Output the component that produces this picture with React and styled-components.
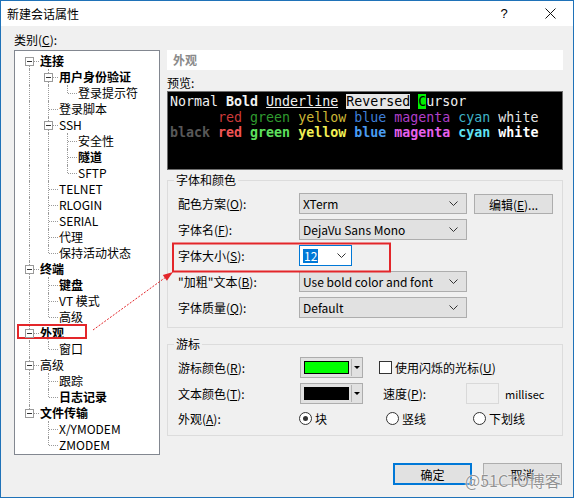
import React from 'react';
import styled, { createGlobalStyle } from 'styled-components';

const Global = createGlobalStyle`
  html, body { margin: 0; padding: 0; background: #ffffff; }
  body { font-family: "Noto Sans CJK SC", sans-serif; font-size: 12px; color: #000; }
  * { box-sizing: border-box; }
`;

const Window = styled.div`
  position: relative;
  width: 574px;
  height: 498px;
  border: 1px solid #1f72b8;
  display: flex;
  flex-direction: column;
  background: #f0f0f0;
`;

const TitleBar = styled.div`
  height: 25px;
  background: #ffffff;
  display: flex;
  align-items: center;
  flex: none;
`;

const TitleText = styled.div`
  padding-left: 6px;
  line-height: 25px;
  flex: 1;
`;

const TitleButton = styled.div`
  width: 46px;
  height: 25px;
  display: flex;
  align-items: center;
  justify-content: center;
  font-family: "Liberation Sans", sans-serif;
  font-size: 13px;
`;

const Body = styled.div`
  flex: 1;
  display: flex;
  flex-direction: column;
  padding: 6px 10px 0 13px;
`;

const Main = styled.div`
  display: flex;
  gap: 7px;
  align-items: flex-start;
`;

const LeftCol = styled.div`
  width: 146px;
  display: flex;
  flex-direction: column;
  gap: 2px;
`;

const Label = styled.div`
  line-height: 16px;
  white-space: nowrap;
`;

const Mn = styled.span`
  text-decoration: underline;
`;

const TreeBox = styled.div`
  height: 405px;
  background: #ffffff;
  border: 1px solid #828790;
  padding: 2px 0 0 5px;
  overflow: hidden;
`;

const TreeRow = styled.div`
  display: flex;
  align-items: center;
  height: 16px;
`;

const Cell = styled.div`
  position: relative;
  flex: none;
  width: 19px;
  height: 16px;
  &::before {
    content: '';
    display: ${p => (p.$v ? 'block' : 'none')};
    position: absolute;
    left: 9px;
    top: ${p => (p.$top ? '0' : '8px')};
    bottom: ${p => (p.$bottom ? '0' : '8px')};
    border-left: 1px dotted #9a9a9a;
  }
  &::after {
    content: '';
    display: ${p => (p.$h ? 'block' : 'none')};
    position: absolute;
    left: 10px;
    right: 0;
    top: 8px;
    border-top: 1px dotted #9a9a9a;
  }
`;

const ExpandBox = styled.span`
  position: absolute;
  z-index: 1;
  left: 5px;
  top: 4px;
  width: 9px;
  height: 9px;
  border: 1px solid #9a9a9a;
  background: #ffffff;
  &::after {
    content: '';
    position: absolute;
    left: 1px;
    top: 3px;
    width: 5px;
    height: 1px;
    background: #333;
  }
`;

const TreeText = styled.span`
  margin-left: 1px;
  line-height: 16px;
  white-space: nowrap;
  font-weight: ${p => (p.$bold ? 700 : 400)};
`;

const RightCol = styled.div`
  width: 396px;
  padding-top: 18px;
  display: flex;
  flex-direction: column;
`;

const Heading = styled.div`
  height: 20px;
  line-height: 20px;
  background: #ffffff;
  padding-left: 6px;
  color: #8a8a8a;
  font-weight: 700;
`;

const PreviewLabel = styled(Label)`
  margin-top: 5px;
`;

const Preview = styled.div`
  height: 79px;
  background: #000000;
  border: 1px solid #6d6d6d;
  padding: 2px 2px;
  font-family: "DejaVu Sans Mono", monospace;
  font-size: 13.3px;
  line-height: 15.5px;
  color: #f2f2f2;
  white-space: pre;
`;

const PLine = styled.div``;

const T = styled.span`
  color: ${p => p.$c || 'inherit'};
  font-weight: ${p => (p.$b ? 700 : 400)};
  text-decoration: ${p => (p.$u ? 'underline' : 'none')};
  background: ${p => p.$bg || 'transparent'};
`;

const Group = styled.fieldset`
  margin: ${p => p.$mt}px 0 0 0;
  border: 1px solid #dcdcdc;
  padding: 5px 9px ${p => p.$pb}px 10px;
  min-width: 0;
`;

const Legend = styled.legend`
  padding: 0 2px;
  margin-left: -4px;
  line-height: 16px;
`;

const FontGrid = styled.div`
  display: grid;
  grid-template-columns: 114px 168px 79px;
  column-gap: 7px;
  row-gap: 5px;
  align-items: center;
`;

const FieldLabel = styled.div`
  line-height: 21px;
  white-space: nowrap;
`;

const Combo = styled.div`
  height: 21px;
  width: ${p => (p.$w ? `${p.$w}px` : 'auto')};
  border: 1px solid ${p => (p.$focus ? '#0078d7' : '#adadad')};
  background: ${p => (p.$focus ? '#ffffff' : '#e1e1e1')};
  display: flex;
  align-items: center;
  justify-content: space-between;
  padding: 0 ${p => (p.$focus ? 5 : 8)}px 0 3px;
  white-space: nowrap;
`;

const Selected = styled.span`
  background: #0078d7;
  color: #ffffff;
  line-height: 14px;
  padding: 0 1px;
`;

const Button = styled.div`
  height: ${p => p.$h || 21}px;
  width: 79px;
  display: flex;
  align-items: center;
  justify-content: center;
  background: #e1e1e1;
  border: 1px solid ${p => (p.$default ? '#0078d7' : '#adadad')};
  box-shadow: ${p => (p.$default ? 'inset 0 0 0 1px #0078d7' : 'none')};
  white-space: nowrap;
`;

const EditButton = styled(Button)`
  align-self: end;
  height: 20px;
`;

const CursorRow = styled.div`
  display: flex;
  align-items: center;
  height: ${p => p.$h || 21}px;
  margin-top: ${p => p.$mt || 0}px;
`;

const RowLabel = styled.div`
  width: ${p => p.$w}px;
  flex: none;
  white-space: nowrap;
`;

const ColorBtn = styled.div`
  width: 63px;
  height: 21px;
  flex: none;
  background: #e1e1e1;
  border: 1px solid #adadad;
  display: flex;
  align-items: center;
  padding-left: 3px;
`;

const Swatch = styled.span`
  width: 45px;
  height: 13px;
  border: 1px solid #000;
  background: ${p => p.$c};
`;

const Divider = styled.span`
  width: 1px;
  height: 17px;
  margin-left: 2px;
  background: #b5b5b5;
`;

const DropTri = styled.span`
  margin-left: 2px;
  width: 0;
  height: 0;
  border-left: 3px solid transparent;
  border-right: 3px solid transparent;
  border-top: 3px solid #000;
`;

const Check = styled.span`
  width: 13px;
  height: 13px;
  flex: none;
  border: 1px solid #333;
  background: #ffffff;
  margin-left: ${p => p.$ml}px;
  margin-right: 3px;
`;

const SpeedLabel = styled.div`
  margin-left: 20px;
  width: 83px;
  flex: none;
`;

const SpeedInput = styled.div`
  width: 33px;
  height: 21px;
  border: 1px solid #d9d9d9;
  background: #f0f0f0;
`;

const Small = styled.span`
  margin-left: 6px;
  font-size: 11px;
`;

const RadioOpt = styled.div`
  width: 87px;
  flex: none;
  display: flex;
  align-items: center;
  gap: 3px;
`;

const Radio = styled.span`
  width: 13px;
  height: 13px;
  border-radius: 50%;
  border: 1px solid #333;
  background: #ffffff;
  display: flex;
  align-items: center;
  justify-content: center;
  &::after {
    content: '';
    display: ${p => (p.$on ? 'block' : 'none')};
    width: 5px;
    height: 5px;
    border-radius: 50%;
    background: #333;
  }
`;

const Footer = styled.div`
  display: flex;
  justify-content: flex-end;
  gap: 11px;
  margin-top: 8px;
  padding-right: 1px;
`;

const Overlay = styled.svg`
  position: absolute;
  left: -1px;
  top: -1px;
  pointer-events: none;
`;

const Watermark = styled.span`
  position: absolute;
  left: 464px;
  top: 469px;
  font-size: 16px;
  line-height: 20px;
  color: rgba(110, 110, 110, 0.75);
  text-shadow: 0 0 2px #fff, 0 0 1px #fff;
  white-space: nowrap;
`;

const Chevron = ({ w = 9 }) => (
  <svg width={w} height="5" viewBox="0 0 9 5">
    <polyline points="0.5,0.5 4.5,4.5 8.5,0.5" fill="none" stroke="#333" strokeWidth="1" />
  </svg>
);

const treeItems = [
  { label: '连接', depth: 0, bold: true, box: true },
  { label: '用户身份验证', depth: 1, bold: true, box: true },
  { label: '登录提示符', depth: 2 },
  { label: '登录脚本', depth: 1 },
  { label: 'SSH', depth: 1, box: true },
  { label: '安全性', depth: 2 },
  { label: '隧道', depth: 2, bold: true },
  { label: 'SFTP', depth: 2 },
  { label: 'TELNET', depth: 1 },
  { label: 'RLOGIN', depth: 1 },
  { label: 'SERIAL', depth: 1 },
  { label: '代理', depth: 1 },
  { label: '保持活动状态', depth: 1 },
  { label: '终端', depth: 0, bold: true, box: true },
  { label: '键盘', depth: 1, bold: true },
  { label: 'VT 模式', depth: 1 },
  { label: '高级', depth: 1 },
  { label: '外观', depth: 0, bold: true, box: true },
  { label: '窗口', depth: 1 },
  { label: '高级', depth: 0, box: true },
  { label: '跟踪', depth: 1 },
  { label: '日志记录', depth: 1, bold: true },
  { label: '文件传输', depth: 0, bold: true, box: true },
  { label: 'X/YMODEM', depth: 1 },
  { label: 'ZMODEM', depth: 1 },
];

function hasNext(i, depth) {
  for (let j = i + 1; j < treeItems.length; j++) {
    if (treeItems[j].depth < depth) return false;
    if (treeItems[j].depth === depth) return true;
  }
  return false;
}

function Tree() {
  return (
    <TreeBox>
      {treeItems.map((it, i) => {
        const guides = [];
        for (let k = 0; k < it.depth; k++) {
          const on = hasNext(i, k);
          guides.push(<Cell key={k} $v={on} $top $bottom />);
        }
        const next = hasNext(i, it.depth);
        return (
          <TreeRow key={i}>
            {guides}
            <Cell $v $top={i !== 0} $bottom={next} $h>
              {it.box && <ExpandBox />}
            </Cell>
            <TreeText $bold={it.bold}>{it.label}</TreeText>
          </TreeRow>
        );
      })}
    </TreeBox>
  );
}

export default function App() {
  const tip = [173, 272];
  return (
    <>
      <Global />
      <Window>
        <TitleBar>
          <TitleText>新建会话属性</TitleText>
          <TitleButton>?</TitleButton>
          <TitleButton>
            <svg width="11" height="11" viewBox="0 0 11 11">
              <path d="M0.5 0.5 L10.5 10.5 M10.5 0.5 L0.5 10.5" stroke="#111" strokeWidth="1" />
            </svg>
          </TitleButton>
        </TitleBar>
        <Body>
          <Main>
            <LeftCol>
              <Label>类别(<Mn>C</Mn>):</Label>
              <Tree />
            </LeftCol>
            <RightCol>
              <Heading>外观</Heading>
              <PreviewLabel>预览:</PreviewLabel>
              <Preview>
                <PLine>
                  <T>Normal </T><T $b>Bold</T> <T $u>Underline</T> <T $bg="#e6e6e6" $c="#000">Reversed</T>{' '}
                  <T $bg="#00f000" $c="#000">C</T>ursor
                </PLine>
                <PLine>
                  <T $c="#000">black</T> <T $c="#cd3a3a">red</T> <T $c="#2f9a2f">green</T>{' '}
                  <T $c="#cdb836">yellow</T> <T $c="#3f7fd8">blue</T> <T $c="#b03fc8">magenta</T>{' '}
                  <T $c="#3fb4c8">cyan</T> <T $c="#e5e5e5">white</T>
                </PLine>
                <PLine>
                  <T $b $c="#585858">black</T> <T $b $c="#f05555">red</T> <T $b $c="#5ee05e">green</T>{' '}
                  <T $b $c="#f2f055">yellow</T> <T $b $c="#4a9cf2">blue</T> <T $b $c="#e660ec">magenta</T>{' '}
                  <T $b $c="#5fe2f2">cyan</T> <T $b $c="#ffffff">white</T>
                </PLine>
              </Preview>

              <Group $mt={2} $pb={9}>
                <Legend>字体和颜色</Legend>
                <FontGrid>
                  <FieldLabel>配色方案(<Mn>O</Mn>):</FieldLabel>
                  <Combo>XTerm<Chevron /></Combo>
                  <EditButton>编辑(<Mn>E</Mn>)...</EditButton>

                  <FieldLabel>字体名(<Mn>F</Mn>):</FieldLabel>
                  <Combo>DejaVu Sans Mono<Chevron /></Combo>
                  <span />

                  <FieldLabel>字体大小(<Mn>S</Mn>):</FieldLabel>
                  <Combo $focus $w={53}><Selected>12</Selected><Chevron /></Combo>
                  <span />

                  <FieldLabel>"加粗"文本(<Mn>B</Mn>):</FieldLabel>
                  <Combo>Use bold color and font<Chevron /></Combo>
                  <span />

                  <FieldLabel>字体质量(<Mn>Q</Mn>):</FieldLabel>
                  <Combo>Default<Chevron /></Combo>
                  <span />
                </FontGrid>
              </Group>

              <Group $mt={8} $pb={7}>
                <Legend>游标</Legend>
                <CursorRow>
                  <RowLabel $w={122}>游标颜色(<Mn>R</Mn>):</RowLabel>
                  <ColorBtn><Swatch $c="#00ff00" /><Divider /><DropTri /></ColorBtn>
                  <Check $ml={16} />
                  <span>使用闪烁的光标(<Mn>U</Mn>)</span>
                </CursorRow>
                <CursorRow $mt={5}>
                  <RowLabel $w={122}>文本颜色(<Mn>T</Mn>):</RowLabel>
                  <ColorBtn><Swatch $c="#000000" /><Divider /><DropTri /></ColorBtn>
                  <SpeedLabel>速度(<Mn>P</Mn>):</SpeedLabel>
                  <SpeedInput />
                  <Small>millisec</Small>
                </CursorRow>
                <CursorRow $mt={4} $h={20}>
                  <RowLabel $w={121}>外观(<Mn>A</Mn>):</RowLabel>
                  <RadioOpt><Radio $on />块</RadioOpt>
                  <RadioOpt><Radio />竖线</RadioOpt>
                  <RadioOpt><Radio />下划线</RadioOpt>
                </CursorRow>
              </Group>
            </RightCol>
          </Main>
          <Footer>
            <Button $default $h={22}>确定</Button>
            <Button $h={22}>取消</Button>
          </Footer>
        </Body>

        <Overlay width="575" height="499" viewBox="0 0 575 499">
          <rect x="18" y="325" width="68" height="13" fill="none" stroke="#e3262a" strokeWidth="2" />
          <rect x="173" y="243.5" width="217" height="28" fill="none" stroke="#e3262a" strokeWidth="2" />
          <line x1="93" y1="330" x2="166" y2="277" stroke="#e3262a" strokeWidth="1" strokeDasharray="2 1.5" />
          <polygon points={`${tip[0]},${tip[1]} 166.9,280.7 162.8,275.1`} fill="#e3262a" />
        </Overlay>
        <Watermark>@51CTO博客</Watermark>
      </Window>
    </>
  );
}
